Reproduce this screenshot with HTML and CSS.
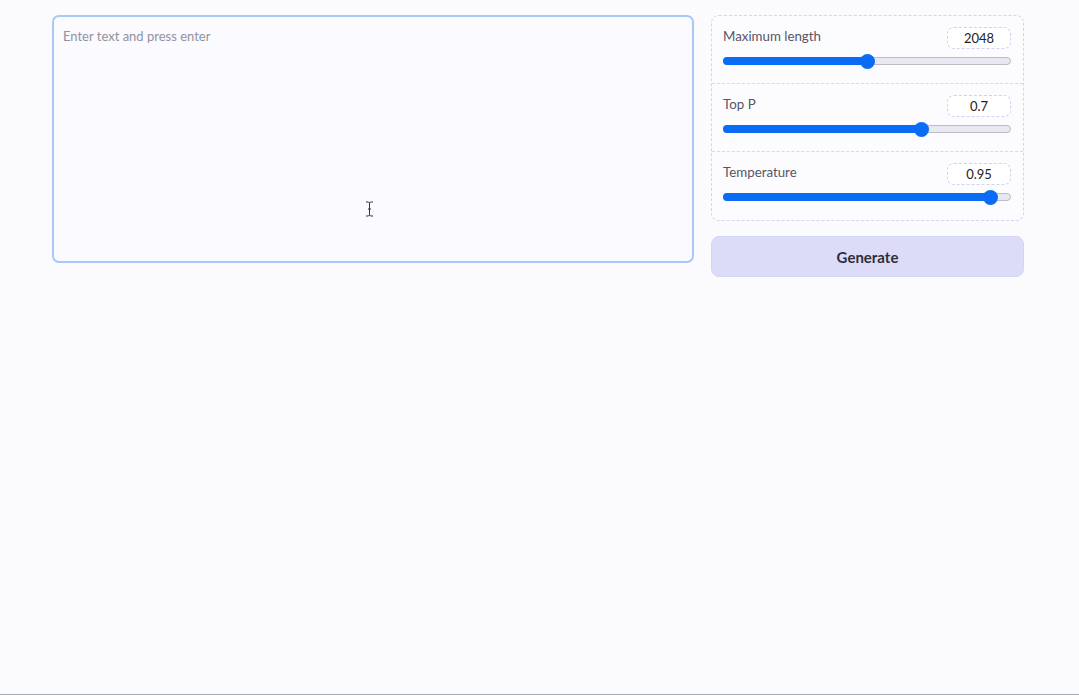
FILE: index.html
```html
<!DOCTYPE html>
<html>
<head>
<meta charset="utf-8">
<link rel="stylesheet" href="styles.css">
</head>
<body>
<div class="page">
  <div class="row">
    <div class="left">
      <div class="textbox">
        <span class="placeholder">Enter text and press enter</span>
      </div>
    </div>
    <div class="right">
      <div class="panel">
        <div class="param">
          <div class="head">
            <span class="label">Maximum length</span>
            <span class="num">2048</span>
          </div>
          <div class="track"><div class="fill" style="width:50%"></div><div class="thumb" style="left:50%"></div></div>
        </div>
        <div class="param">
          <div class="head">
            <span class="label">Top P</span>
            <span class="num">0.7</span>
          </div>
          <div class="track"><div class="fill" style="width:69%"></div><div class="thumb" style="left:69%"></div></div>
        </div>
        <div class="param">
          <div class="head">
            <span class="label">Temperature</span>
            <span class="num">0.95</span>
          </div>
          <div class="track"><div class="fill" style="width:93%"></div><div class="thumb" style="left:93%"></div></div>
        </div>
      </div>
      <button class="generate">Generate</button>
    </div>
  </div>
</div>
<svg class="cursor" width="9" height="16" viewBox="0 0 9 16"><path d="M1 1h2.5l1 1 1-1H8M4.5 2v12M1 15h2.5l1-1 1 1H8M3 8h3" stroke="#333" stroke-width="1" fill="none"/></svg>
</body>
</html>
```
FILE: styles.css
```css
html, body {
  margin: 0;
  padding: 0;
  background: #fbfbfd;
  font-family: "Source Sans Pro", Lato, "Noto Sans", sans-serif;
}
.page {
  height: 694px;
  border-bottom: 1px solid #a9a9b4;
  position: relative;
}
.row {
  display: flex;
  gap: 17px;
  padding: 15px 0 0 52px;
  align-items: flex-start;
}
.left {
  width: 642px;
}
.textbox {
  box-sizing: border-box;
  height: 248px;
  border: 2px solid #a9c8fa;
  border-radius: 7px;
  background: #fafaff;
  padding: 8px 9px;
}
.placeholder {
  font-size: 13px;
  color: #92929e;
}
.right {
  width: 313px;
  display: flex;
  flex-direction: column;
  gap: 16px;
}
.panel {
  border: 1px dashed #d3d3f2;
  border-radius: 8px;
  background: #fcfcff;
}
.param {
  height: 68px;
  box-sizing: border-box;
  padding: 11px 12px 0 11px;
  border-bottom: 1px dashed #d6d6f2;
}
.param:last-child {
  border-bottom: none;
}
.head {
  display: flex;
  justify-content: space-between;
  align-items: flex-start;
  height: 22px;
}
.label {
  font-size: 13.3px;
  color: #555566;
  line-height: 18px;
}
.num {
  box-sizing: border-box;
  width: 64px;
  height: 22px;
  border: 1px dashed #d0d0ef;
  border-radius: 7px;
  font-size: 13px;
  color: #222;
  text-align: center;
  line-height: 21px;
  background: #fff;
}
.track {
  position: relative;
  margin-top: 8px;
  height: 8px;
  border-radius: 4px;
  background: #e8e8f2;
  border: 1px solid #bcbcc4;
  box-sizing: border-box;
}
.fill {
  position: absolute;
  left: -1px;
  top: -1px;
  height: 8px;
  border-radius: 4px;
  background: #0a6cf5;
}
.thumb {
  position: absolute;
  top: 50%;
  width: 15px;
  height: 15px;
  margin-left: -7px;
  margin-top: -7.5px;
  border-radius: 50%;
  background: #0a6cf5;
}
.generate {
  height: 41px;
  margin-top: -1px;
  border: 1px solid #d4d4f6;
  border-radius: 8px;
  background: #dcdcf8;
  font-family: inherit;
  font-size: 15px;
  font-weight: 700;
  color: #2e2e38;
}
.cursor {
  position: absolute;
  left: 365px;
  top: 201px;
}
```
